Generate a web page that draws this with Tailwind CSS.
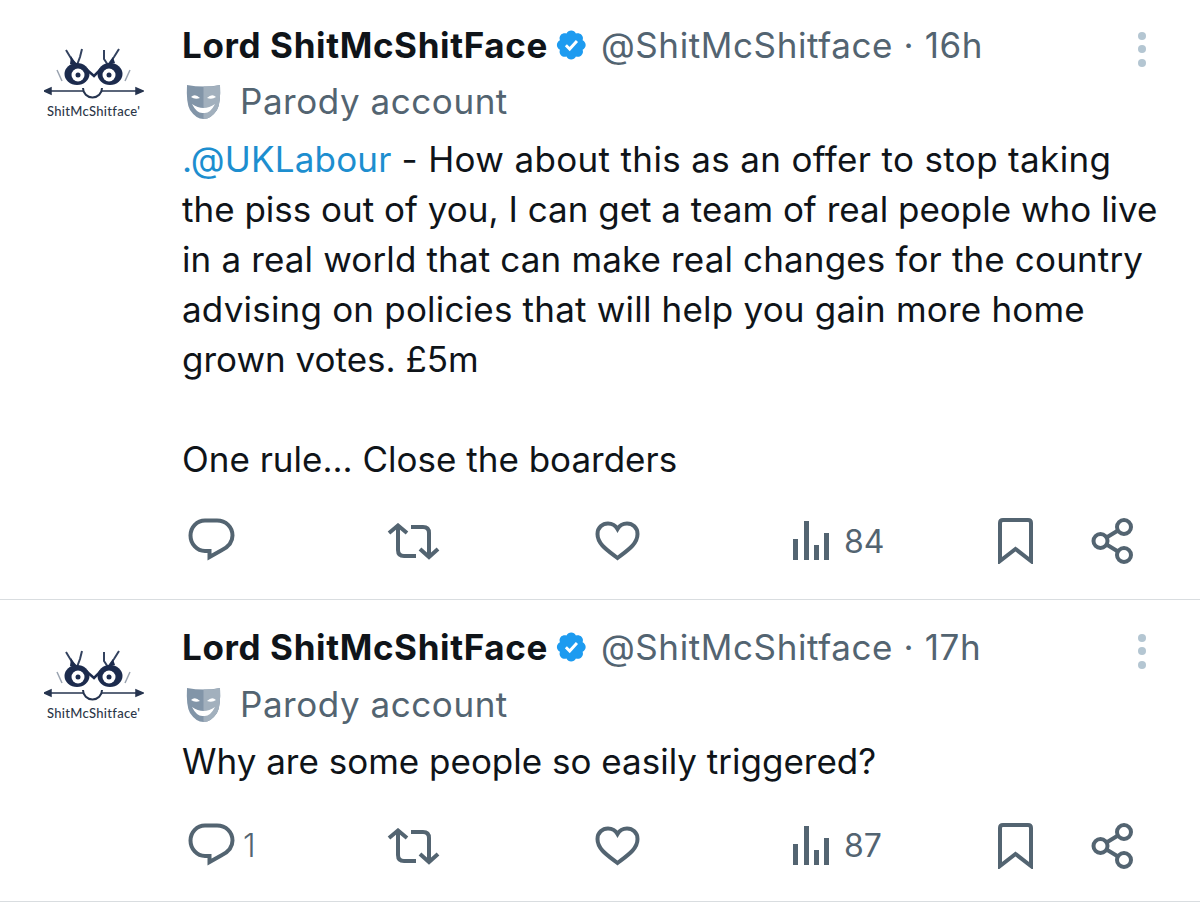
<!DOCTYPE html>
<html><head><meta charset="utf-8"><script src="https://cdn.jsdelivr.net/npm/@tailwindcss/browser@4"></script></head>
<body class="bg-white w-[1200px] h-[906px] overflow-hidden font-['Inter',sans-serif] text-[#0f1419]">

<article class="flex h-[600px] border-b border-[#d9dde0] pt-5">
  <div class="w-[182px] shrink-0 pl-[44px] pt-[28px]">
    <svg width="100" height="72" viewBox="0 0 100 72">
      <path d="M22 2 L28 12 L33 17 L36 9 L38 1 M75 1 L70 9 L64 17 L60 11 L60 2" stroke="#33425f" stroke-width="2" fill="none"/>
      <path d="M27 8 L33 17 L26 16z M69 9 L64 17 L71 15z" fill="#1c2b4d"/>
      <path d="M13 22 L18 33 M86 22 L81 33" stroke="#9aa3b0" stroke-width="1.500" fill="none"/>
      <ellipse cx="33" cy="26" rx="12.500" ry="11" fill="#1c2b4d"/><ellipse cx="66" cy="26" rx="12.500" ry="11" fill="#1c2b4d"/>
      <circle cx="34" cy="27" r="6.500" fill="#fff"/><circle cx="65" cy="27" r="6.500" fill="#fff"/>
      <circle cx="34" cy="27" r="2.500" fill="#1c2b4d"/><circle cx="65" cy="27" r="2.500" fill="#1c2b4d"/>
      <path d="M42 21 L50 28 L57 21" stroke="#1c2b4d" stroke-width="2.500" fill="none"/>
      <path d="M0 43 H99 M0 43 l7 -3 v6 z M99 43 l-7 -3 v6 z" stroke="#26344f" stroke-width="1.500" fill="#26344f"/>
      <path d="M39 40 a9.500 9.500 0 0 0 19 0" stroke="#26344f" stroke-width="2" fill="#fff"/>
      <text x="3" y="68" font-size="13" font-weight="500" letter-spacing="0.3" fill="#2c3648" font-family="Lato">ShitMcShitface'</text>
    </svg>
  </div>
  <div class="flex-1 min-w-0">
    <div class="flex items-center h-[50px] text-[35px]">
      <span class="font-bold tracking-[0.62px]">Lord ShitMcShitFace</span>
      <svg class="ml-[8px] mr-[13px]" width="32" height="32" viewBox="0 0 22 22"><path fill="#1d9bf0" d="M20.4 11c0-1.4-.9-2.7-2.1-3.3.5-1.3.2-2.8-.8-3.8s-2.5-1.3-3.8-.8C13.1 1.9 11.900 1 10.500 1S7.800 1.900 7.200 3.100c-1.300-.5-2.800-.2-3.800.8s-1.200 2.500-.7 3.800C1.500 8.300.6 9.600.6 11s.9 2.700 2.100 3.300c-.5 1.300-.2 2.800.7 3.800 1 1 2.500 1.300 3.800.8.6 1.200 1.800 2.100 3.200 2.100s2.700-.9 3.300-2.100c1.300.5 2.800.2 3.800-.8s1.300-2.500.8-3.800c1.200-.6 2.100-1.900 2.100-3.300z"/><path d="M6.800 11.200l2.600 2.600 5-5.500" stroke="#fff" stroke-width="2" fill="none"/></svg>
      <span class="text-[#536471] whitespace-nowrap tracking-[0.6px]">@ShitMcShitface · 16h</span>
      <span class="ml-auto mr-[54px] flex flex-col gap-[5.5px] mt-[8px]"><i class="block size-[8px] rounded-full bg-[#b4c6d2]"></i><i class="block size-[8px] rounded-full bg-[#b4c6d2]"></i><i class="block size-[8px] rounded-full bg-[#b4c6d2]"></i></span>
    </div>
    <div class="flex items-center h-[50px] mt-[6px] text-[35px] text-[#536471]">
      <svg class="ml-[4px] mr-[19px]" width="35" height="37" viewBox="0 0 35 37"><path d="M1 2 Q18 5 34 2 Q35 20 31 27 Q25 36 17.500 36 Q10 36 4 27 Q0 20 1 2z" fill="#8295a8"/><path d="M17.500 3.500 Q26 4 34 2 Q35 20 31 27 Q25 36 17.500 36z" fill="#a2b0bd"/><path d="M5 14 Q9 10 14 15 Q9 17 5 14z M21 15 Q26 10 30 14 Q26 17 21 15z M6 21 Q17.500 29 29 21 Q24 31 17.500 30 Q11 31 6 21z" fill="#fff"/></svg>
      <span class="tracking-[0.55px]">Parody account</span>
    </div>
    <div class="mt-[8px] text-[35px] leading-[50px] whitespace-nowrap">
      <p><span class="text-[#1d8ecf] tracking-[0.2px]">.@UKLabour</span> <span class="tracking-[0.35px]">- How about this as an offer to stop taking</span></p>
      <p>the piss out of you, I can get a team of real people who live</p>
      <p class="tracking-[0.14px]">in a real world that can make real changes for the country</p>
      <p class="tracking-[0.2px]">advising on policies that will help you gain more home</p>
      <p>grown votes. £5m</p>
      <p class="mt-[50px]">One rule... Close the boarders</p>
    </div>
    <div class="flex items-center h-[50px] mt-[32px] text-[32px] text-[#536471]">
      <svg class="ml-[6px]" width="47" height="46" viewBox="0 0 47 46"><path d="M17 2.500 H29 C38 2.500 44.500 9 44.500 17.500 C44.500 25 40 29 34 32 L21.500 39 V33 H17 C9 33 2.500 26 2.500 17.500 C2.500 9 9 2.500 17 2.500z" stroke="#536471" stroke-width="4" fill="none"/></svg>
      <svg class="ml-[152px]" width="53" height="37" viewBox="0 0 53 37"><path d="M2 10 L11 2.500 L20 10 M11 3 V27 Q11 33 17 33 H29 M24 4 H36 Q42 4 42 10 V34 M33 26 L42 34 L51 26" stroke="#536471" stroke-width="4" fill="none"/></svg>
      <svg class="ml-[155px]" width="45" height="40" viewBox="0 0 45 40"><path d="M22.500 37 C12 29 2.500 23 2.500 13 C2.500 6.500 7.500 2.500 13 2.500 C17 2.500 20.500 4.500 22.500 8 C24.500 4.500 28 2.500 32 2.500 C37.500 2.500 42.500 6.500 42.500 13 C42.500 23 33 29 22.500 37z" stroke="#536471" stroke-width="4" fill="none"/></svg>
      <svg class="ml-[153px]" width="37" height="40" viewBox="0 0 37 40"><path d="M0 18 h5 v21 h-5z M11 0 h5 v39 h-5z M21 24 h5 v15 h-5z M31 12 h5 v27 h-5z" fill="#536471"/></svg>
      <span class="ml-[14px] w-[40px] mt-[2px]">84</span>
      <svg class="ml-[114px]" width="35" height="46" viewBox="0 0 35 46"><path d="M2 43 V5 Q2 2 5 2 H30 Q33 2 33 5 V43 L17.500 31z" stroke="#536471" stroke-width="4" fill="none"/></svg>
      <svg class="ml-[58px]" width="44" height="46" viewBox="0 0 44 46"><circle cx="9.500" cy="23" r="7" stroke="#536471" stroke-width="4" fill="none"/><circle cx="33" cy="9" r="7" stroke="#536471" stroke-width="4" fill="none"/><circle cx="33" cy="37" r="7" stroke="#536471" stroke-width="4" fill="none"/><path d="M15.500 19.500 L27 12.500 M15.500 26.500 L27 33.500" stroke="#536471" stroke-width="4"/></svg>
    </div>
  </div>
</article>

<article class="flex h-[302px] border-b border-[#d9dde0] pt-[22px]">
  <div class="w-[182px] shrink-0 pl-[44px] pt-[28px]">
    <svg width="100" height="72" viewBox="0 0 100 72">
      <path d="M22 2 L28 12 L33 17 L36 9 L38 1 M75 1 L70 9 L64 17 L60 11 L60 2" stroke="#33425f" stroke-width="2" fill="none"/>
      <path d="M27 8 L33 17 L26 16z M69 9 L64 17 L71 15z" fill="#1c2b4d"/>
      <path d="M13 22 L18 33 M86 22 L81 33" stroke="#9aa3b0" stroke-width="1.500" fill="none"/>
      <ellipse cx="33" cy="26" rx="12.500" ry="11" fill="#1c2b4d"/><ellipse cx="66" cy="26" rx="12.500" ry="11" fill="#1c2b4d"/>
      <circle cx="34" cy="27" r="6.500" fill="#fff"/><circle cx="65" cy="27" r="6.500" fill="#fff"/>
      <circle cx="34" cy="27" r="2.500" fill="#1c2b4d"/><circle cx="65" cy="27" r="2.500" fill="#1c2b4d"/>
      <path d="M42 21 L50 28 L57 21" stroke="#1c2b4d" stroke-width="2.500" fill="none"/>
      <path d="M0 43 H99 M0 43 l7 -3 v6 z M99 43 l-7 -3 v6 z" stroke="#26344f" stroke-width="1.500" fill="#26344f"/>
      <path d="M39 40 a9.500 9.500 0 0 0 19 0" stroke="#26344f" stroke-width="2" fill="#fff"/>
      <text x="3" y="68" font-size="13" font-weight="500" letter-spacing="0.3" fill="#2c3648" font-family="Lato">ShitMcShitface'</text>
    </svg>
  </div>
  <div class="flex-1 min-w-0">
    <div class="flex items-center h-[50px] text-[35px]">
      <span class="font-bold tracking-[0.62px]">Lord ShitMcShitFace</span>
      <svg class="ml-[8px] mr-[13px]" width="32" height="32" viewBox="0 0 22 22"><path fill="#1d9bf0" d="M20.4 11c0-1.4-.9-2.7-2.1-3.3.5-1.3.2-2.8-.8-3.8s-2.5-1.3-3.8-.8C13.1 1.9 11.900 1 10.500 1S7.800 1.900 7.200 3.100c-1.300-.5-2.800-.2-3.800.8s-1.200 2.500-.7 3.800C1.500 8.300.6 9.600.6 11s.9 2.700 2.100 3.300c-.5 1.300-.2 2.800.7 3.800 1 1 2.500 1.300 3.800.8.6 1.200 1.800 2.100 3.200 2.100s2.700-.9 3.300-2.100c1.300.5 2.800.2 3.800-.8s1.300-2.500.8-3.800c1.200-.6 2.100-1.900 2.100-3.300z"/><path d="M6.800 11.200l2.600 2.600 5-5.500" stroke="#fff" stroke-width="2" fill="none"/></svg>
      <span class="text-[#536471] whitespace-nowrap tracking-[0.6px]">@ShitMcShitface · 17h</span>
      <span class="ml-auto mr-[54px] flex flex-col gap-[5.5px] mt-[8px]"><i class="block size-[8px] rounded-full bg-[#b4c6d2]"></i><i class="block size-[8px] rounded-full bg-[#b4c6d2]"></i><i class="block size-[8px] rounded-full bg-[#b4c6d2]"></i></span>
    </div>
    <div class="flex items-center h-[50px] mt-[7px] text-[35px] text-[#536471]">
      <svg class="ml-[4px] mr-[19px]" width="35" height="37" viewBox="0 0 35 37"><path d="M1 2 Q18 5 34 2 Q35 20 31 27 Q25 36 17.500 36 Q10 36 4 27 Q0 20 1 2z" fill="#8295a8"/><path d="M17.500 3.500 Q26 4 34 2 Q35 20 31 27 Q25 36 17.500 36z" fill="#a2b0bd"/><path d="M5 14 Q9 10 14 15 Q9 17 5 14z M21 15 Q26 10 30 14 Q26 17 21 15z M6 21 Q17.500 29 29 21 Q24 31 17.500 30 Q11 31 6 21z" fill="#fff"/></svg>
      <span class="tracking-[0.55px]">Parody account</span>
    </div>
    <p class="mt-[7px] text-[35px] leading-[50px] whitespace-nowrap">Why are some people so easily triggered?</p>
    <div class="flex items-center h-[50px] mt-[35px] text-[32px] text-[#536471]">
      <svg class="ml-[6px]" width="47" height="46" viewBox="0 0 47 46"><path d="M17 2.500 H29 C38 2.500 44.500 9 44.500 17.500 C44.500 25 40 29 34 32 L21.500 39 V33 H17 C9 33 2.500 26 2.500 17.500 C2.500 9 9 2.500 17 2.500z" stroke="#536471" stroke-width="4" fill="none"/></svg>
      <span class="w-[152px] pl-[8px] font-light">1</span>
      <svg width="53" height="37" viewBox="0 0 53 37"><path d="M2 10 L11 2.500 L20 10 M11 3 V27 Q11 33 17 33 H29 M24 4 H36 Q42 4 42 10 V34 M33 26 L42 34 L51 26" stroke="#536471" stroke-width="4" fill="none"/></svg>
      <svg class="ml-[155px]" width="45" height="40" viewBox="0 0 45 40"><path d="M22.500 37 C12 29 2.500 23 2.500 13 C2.500 6.500 7.500 2.500 13 2.500 C17 2.500 20.500 4.500 22.500 8 C24.500 4.500 28 2.500 32 2.500 C37.500 2.500 42.500 6.500 42.500 13 C42.500 23 33 29 22.500 37z" stroke="#536471" stroke-width="4" fill="none"/></svg>
      <svg class="ml-[153px]" width="37" height="40" viewBox="0 0 37 40"><path d="M0 18 h5 v21 h-5z M11 0 h5 v39 h-5z M21 24 h5 v15 h-5z M31 12 h5 v27 h-5z" fill="#536471"/></svg>
      <span class="ml-[14px] w-[40px]">87</span>
      <svg class="ml-[114px]" width="35" height="46" viewBox="0 0 35 46"><path d="M2 43 V5 Q2 2 5 2 H30 Q33 2 33 5 V43 L17.500 31z" stroke="#536471" stroke-width="4" fill="none"/></svg>
      <svg class="ml-[58px]" width="44" height="46" viewBox="0 0 44 46"><circle cx="9.500" cy="23" r="7" stroke="#536471" stroke-width="4" fill="none"/><circle cx="33" cy="9" r="7" stroke="#536471" stroke-width="4" fill="none"/><circle cx="33" cy="37" r="7" stroke="#536471" stroke-width="4" fill="none"/><path d="M15.500 19.500 L27 12.500 M15.500 26.500 L27 33.500" stroke="#536471" stroke-width="4"/></svg>
    </div>
  </div>
</article>
</body></html>
